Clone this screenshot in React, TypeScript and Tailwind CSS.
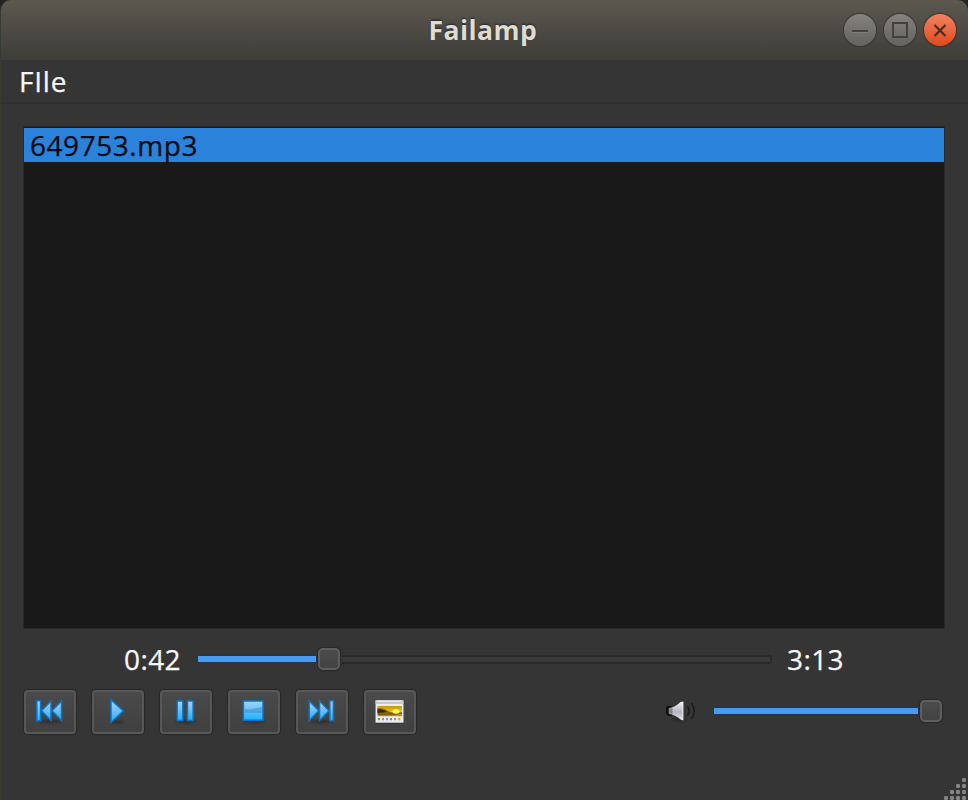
import React from "react";

const buttonClass =
  "flex h-[44px] w-[52px] items-center justify-center rounded-[4px] border-2 border-[#575757] bg-linear-to-b from-[#4a4a4a] to-[#404040] pb-[2px] shadow-[0_0_1px_1px_#282828]";

function Defs() {
  return (
    <svg className="absolute h-0 w-0">
      <defs>
        <linearGradient id="blue" x1="0" y1="0" x2="0" y2="1">
          <stop offset="0" stopColor="#9bd8fc" />
          <stop offset="0.5" stopColor="#6cbff5" />
          <stop offset="1" stopColor="#12b2ff" />
        </linearGradient>
        <linearGradient id="cone" x1="0" y1="0" x2="0" y2="1">
          <stop offset="0" stopColor="#f4f4f6" />
          <stop offset="0.55" stopColor="#b6b4bf" />
          <stop offset="1" stopColor="#e6e6ea" />
        </linearGradient>
        <linearGradient id="photo" x1="0" y1="0" x2="0" y2="1">
          <stop offset="0" stopColor="#c39a08" />
          <stop offset="0.55" stopColor="#e6c51c" />
          <stop offset="1" stopColor="#b88a05" />
        </linearGradient>
        <filter id="soft" x="-30%" y="-100%" width="160%" height="300%">
          <feGaussianBlur stdDeviation="1" />
        </filter>
      </defs>
    </svg>
  );
}

const stroke = { fill: "url(#blue)", stroke: "#0c74cc", strokeWidth: 1.5 };

function Glyph({ children }: { children: React.ReactNode }) {
  return (
    <svg width="32" height="32" viewBox="0 0 32 32" className="shrink-0">
      {children}
    </svg>
  );
}

function Shadow() {
  return <ellipse cx="16" cy="26.5" rx="11" ry="1.4" fill="#222" opacity=".65" filter="url(#soft)" />;
}

function Previous() {
  return (
    <Glyph>
      <Shadow />
      <path d="M17 6V25.5L7.5 15.8ZM27.5 6V25.5L18 15.8Z" {...stroke} />
      <path d="M2.8 5.8h3.8v19.9h-3.8z" {...stroke} />
    </Glyph>
  );
}

function Play() {
  return (
    <Glyph>
      <ellipse cx="15" cy="27" rx="7" ry="1.5" fill="#222" opacity=".7" filter="url(#soft)" />
      <path d="M9 4.7L21.3 16L9 27.5Z" {...stroke} />
    </Glyph>
  );
}

function Pause() {
  return (
    <Glyph>
      <Shadow />
      <path d="M7.2 6h5.6v19.5H7.2zM17.5 6h5.6v19.5h-5.6z" {...stroke} />
    </Glyph>
  );
}

function Stop() {
  return (
    <Glyph>
      <Shadow />
      <path d="M5.4 6h19.6v19.3h-19.6z" {...stroke} />
      <path d="M6.5 18V14C12 15.5 18 12.5 24 12V18Z" fill="#3594d8" opacity=".6" />
    </Glyph>
  );
}

function Next() {
  return (
    <Glyph>
      <Shadow />
      <path d="M3.2 6V25.5L12.8 15.8ZM13.5 6V25.5L23 15.8Z" {...stroke} />
      <path d="M23.8 5.8h3.6v19.9h-3.6z" {...stroke} />
    </Glyph>
  );
}

function Viewer() {
  return (
    <Glyph>
      <path d="M1 5.5h29.5v3l-1.5 1v19h-27.5z" fill="#292929" opacity=".7" />
      <path d="M1.5 5.3h28v22.4h-28z" fill="#eeecef" />
      <path d="M1.5 5.3h28v3.5h-28z" fill="#c4c3c9" />
      <path d="M2.5 6.2h25" stroke="#f6f6f6" />
      <path d="M3.5 11h24.5v10.2h-24.5z" fill="url(#photo)" />
      <path d="M3.5 13q6.500 0 10.500 3t14 1v2q-12 2-24.500 1z" fill="#68480b" opacity=".75" />
      <path d="M3.500 14q5.500 0 9.500 3l-9.500 1z" fill="#3e2704" />
      <ellipse cx="22" cy="16.500" rx="3.500" ry="2.200" fill="#fff45a" />
      <path d="M4 23h2v2.300h-2z" fill="#34b94d" />
      <path d="M8 23h2v2.300h-2z" fill="#d17a7c" />
      <path d="M12 23h2v2.300h-2z" fill="#6d9df0" />
      <path d="M16 23h2v2.300h-2z" fill="#8b7c8f" />
      <path d="M20 23h2v2.300h-2z" fill="#6d9df0" />
      <path d="M24 23h2.300v2.300h-2.300z" fill="#f0a62d" />
    </Glyph>
  );
}

function Speaker() {
  return (
    <svg width="32" height="24" viewBox="0 0 32 24" className="shrink-0">
      <ellipse cx="14" cy="20.5" rx="7" ry="1.2" fill="#222" filter="url(#soft)" />
      <path d="M1.5 7.5Q2.500 6.300 7 7L7 17Q2.500 17.500 1.500 15.500Q.5 11.500 1.500 7.500Z" fill="#0c0c0c" />
      <path d="M4 9Q10 8.500 15.500 3L18.300 2.500V21.500L15.500 20.500Q10 15.500 4 15Z" fill="url(#cone)" />
      <path d="M3.500 9.200h4v5.600h-4z" fill="#77777c" opacity=".8" />
      <path d="M17.700 3v18" stroke="#eeeef2" />
      <path d="M22.500 7.500q3.400 4.500 0 9M26.500 4q5.400 8 0 16" fill="none" stroke="#191919" strokeWidth="1.4" />
    </svg>
  );
}

function Handle() {
  return (
    <div className="mx-[2px] h-[22px] w-[22px] shrink-0 rounded-[5px] border-2 border-[#5e5e5e] bg-linear-to-b from-[#4c4c4c] to-[#434343] shadow-[0_0_1px_1px_#282828]" />
  );
}

function Fill({ width }: { width: string }) {
  return <div className={"h-[6px] shrink-0 bg-[#479bf0] shadow-[0_0_1px_1px_#26364a] " + width} />;
}

const roundClass =
  "flex h-[32px] w-[32px] items-center justify-center rounded-full shadow-[0_0_1px_1px_#363530]";

export default function App() {
  return (
    <div className="h-[800px] w-[968px] overflow-hidden bg-[#252522] font-['Open_Sans','Noto_Sans',sans-serif] text-[28px] text-[#f8f8f8] [-webkit-text-stroke:0.25px_currentColor]">
      <Defs />
      <div className="relative flex h-full flex-col overflow-hidden rounded-t-[11px] border-l border-[#363b30] bg-[#353535]">
        <header className="grid h-[60px] shrink-0 grid-cols-[1fr_auto_1fr] items-center border-t border-[#5a574c] bg-linear-to-b from-[#5b584f] to-[#3e3d38] pr-[12px] pb-[2px]">
          <div />
          <h1 className="ml-[10px] w-[110px] whitespace-nowrap text-[26.5px] leading-[56px] font-bold tracking-[0.45px] text-[#dfdbd2] [text-shadow:0_-1px_2px_#252525] [-webkit-text-stroke:0]">
            Failamp
          </h1>
          <div className="flex justify-end gap-[8px]">
            <button className={roundClass + " bg-linear-to-b from-[#85837d] to-[#63625c]"}>
              <svg width="32" height="32" viewBox="0 0 32 32">
                <path d="M8 17h16" stroke="#42413c" strokeWidth="2" />
                <path d="M8 18.5h16" stroke="#96948b" opacity=".4" />
              </svg>
            </button>
            <button className={roundClass + " bg-linear-to-b from-[#85837d] to-[#63625c]"}>
              <svg width="32" height="32" viewBox="0 0 32 32">
                <path d="M9 9h14v14H9z" fill="none" stroke="#42413c" strokeWidth="2" />
              </svg>
            </button>
            <button className={roundClass + " bg-linear-to-b from-[#f38160] to-[#df4815]"}>
              <svg width="32" height="32" viewBox="0 0 32 32">
                <path d="M10.5 11L21.5 22M21.5 11L10.5 22" stroke="#492f19" strokeWidth="2.2" />
              </svg>
            </button>
          </div>
        </header>

        <nav className="flex h-[44px] shrink-0 items-center border-b-2 border-[#303030] pl-[18px]">
          <span className="leading-[42px] tracking-[0.8px]">FIle</span>
        </nav>

        <main className="flex flex-col pr-[23px] pl-[22px] pt-[22px]">
          <div className="h-[503px] border border-[#292929] bg-[#191919] pt-px">
            <div className="h-[34px] bg-[#2a82da] pl-[6px] leading-[34px] tracking-[0.55px] text-[#080c10]">
              649753.mp3
            </div>
          </div>

          <div className="flex h-[60px] items-center">
            <span className="ml-[101px] w-[74px] tracking-[0.4px] leading-[60px]">0:42</span>
            <Fill width="w-[118px]" />
            <Handle />
            <div className="h-[9px] w-[430px] rounded-r-[3px] border-2 border-l-0 border-[#292929] bg-[#393939]" />
            <span className="ml-[15px] tracking-[0.4px] leading-[60px]">3:13</span>
          </div>

          <div className="flex h-[46px] items-center">
            <div className="ml-px flex gap-[16px]">
              <button className={buttonClass}><Previous /></button>
              <button className={buttonClass}><Play /></button>
              <button className={buttonClass}><Pause /></button>
              <button className={buttonClass}><Stop /></button>
              <button className={buttonClass}><Next /></button>
              <button className={buttonClass}><Viewer /></button>
            </div>
            <div className="ml-[249px] flex items-center pb-[2px]">
              <Speaker />
              <div className="ml-[17px] flex items-center">
                <Fill width="w-[204px]" />
                <Handle />
              </div>
            </div>
          </div>
        </main>

        <svg width="24" height="24" className="absolute right-0 bottom-0">
          {[
            [20, 4],
            [14, 10], [20, 10],
            [8, 16], [14, 16], [20, 16],
            [2, 22], [8, 22], [14, 22], [20, 22],
          ].map(([x, y]) => (
            <rect key={x + "-" + y} x={x - 2} y={y - 2} width="4" height="4" rx="1.2" fill="#858585" />
          ))}
        </svg>
      </div>
    </div>
  );
}
